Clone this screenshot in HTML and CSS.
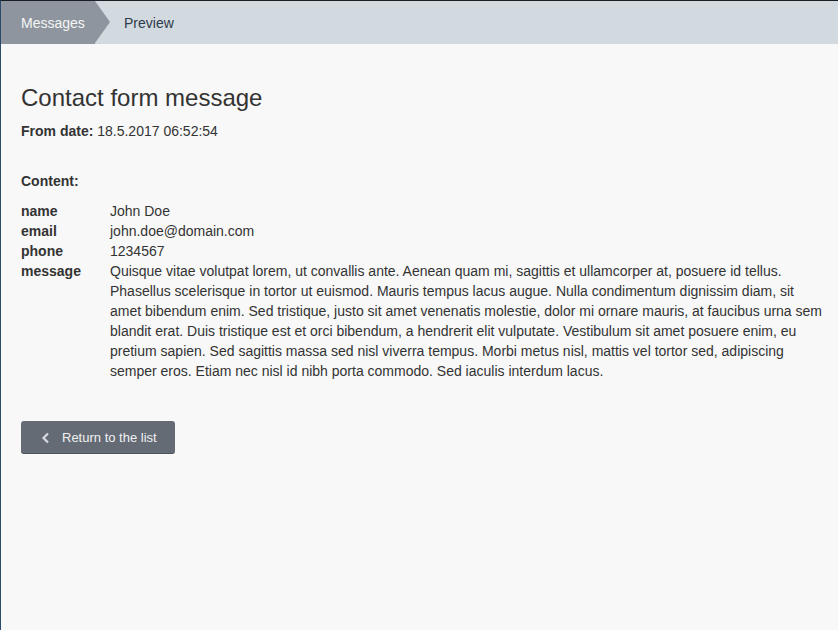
FILE: index.html
```html
<!DOCTYPE html>
<html lang="en">
<head>
  <meta charset="UTF-8">
  <title>Contact form message</title>
  <link rel="stylesheet" href="styles.css">
</head>
<body>
  <nav class="crumbs">
    <a class="crumb crumb-active" href="#">Messages</a>
    <span class="crumb">Preview</span>
  </nav>

  <main class="page">
    <h1>Contact form message</h1>
    <p class="meta"><strong>From date:</strong> 18.5.2017 06:52:54</p>

    <p class="section-title">Content:</p>
    <dl class="fields">
      <dt>name</dt>
      <dd>John Doe</dd>
      <dt>email</dt>
      <dd>john.doe@domain.com</dd>
      <dt>phone</dt>
      <dd>1234567</dd>
      <dt>message</dt>
      <dd class="message">Quisque vitae volutpat lorem, ut convallis ante. Aenean quam mi, sagittis et ullamcorper at, posuere id tellus.<br>
        Phasellus scelerisque in tortor ut euismod. Mauris tempus lacus augue. Nulla condimentum dignissim diam, sit<br>
        amet bibendum enim. Sed tristique, justo sit amet venenatis molestie, dolor mi ornare mauris, at faucibus urna sem<br>
        blandit erat. Duis tristique est et orci bibendum, a hendrerit elit vulputate. Vestibulum sit amet posuere enim, eu<br>
        pretium sapien. Sed sagittis massa sed nisl viverra tempus. Morbi metus nisl, mattis vel tortor sed, adipiscing<br>
        semper eros. Etiam nec nisl id nibh porta commodo. Sed iaculis interdum lacus.</dd>
    </dl>

    <a class="back-button" href="#">
      <svg width="10" height="12" viewBox="0 0 10 12"><path d="M7 1.5 L2.5 6 L7 10.5" fill="none" stroke="currentColor" stroke-width="2.2"/></svg>
      Return to the list
    </a>
  </main>
</body>
</html>
```

FILE: styles.css
```css
html, body {
  height: 100%;
}
body {
  margin: 0;
  box-sizing: border-box;
  font-family: "Liberation Sans", Arial, sans-serif;
  font-size: 14px;
  line-height: 20px;
  color: #333;
  background-color: #f8f8f8;
  border-top: 1px solid #1a1d22;
  border-left: 1px solid #2c4a6b;
}
.crumbs {
  display: flex;
  height: 43px;
  background-color: #d2dae0;
}
.crumb {
  display: flex;
  align-items: center;
  padding: 0 0 0 20px;
  font-size: 14px;
  color: #2f3b4a;
  text-decoration: none;
}
.crumb-active {
  position: relative;
  width: 74px;
  background-color: #8e959e;
  color: #f4f5f6;
}
.crumb-active::after {
  content: "";
  position: absolute;
  top: 0;
  left: 94px;
  border-top: 21.5px solid transparent;
  border-bottom: 21.5px solid transparent;
  border-left: 15px solid #8e959e;
}
.crumb-active + .crumb {
  padding-left: 29px;
}
.page {
  padding: 39px 0 20px 20px;
}
h1 {
  margin: 0 0 8px 0;
  font-size: 24px;
  line-height: 30px;
  font-weight: normal;
  color: #333;
}
.meta {
  margin: 0;
}
.section-title {
  margin: 30px 0 10px 0;
  font-weight: bold;
}
.fields {
  display: grid;
  grid-template-columns: 89px 1fr;
  margin: 0;
}
.fields dt {
  font-weight: bold;
}
.fields dd {
  margin: 0;
}
.message {
  white-space: nowrap;
}
.back-button {
  display: inline-flex;
  align-items: center;
  gap: 11px;
  margin-top: 40px;
  height: 33px;
  padding: 1px 18px 0 20px;
  box-sizing: border-box;
  border-radius: 3px;
  border-bottom: 1px solid #4d535b;
  background-color: #646b75;
  color: #f0f1f2;
  font-size: 13px;
  text-decoration: none;
}
.back-button svg {
  color: #d6d9dd;
}
```
